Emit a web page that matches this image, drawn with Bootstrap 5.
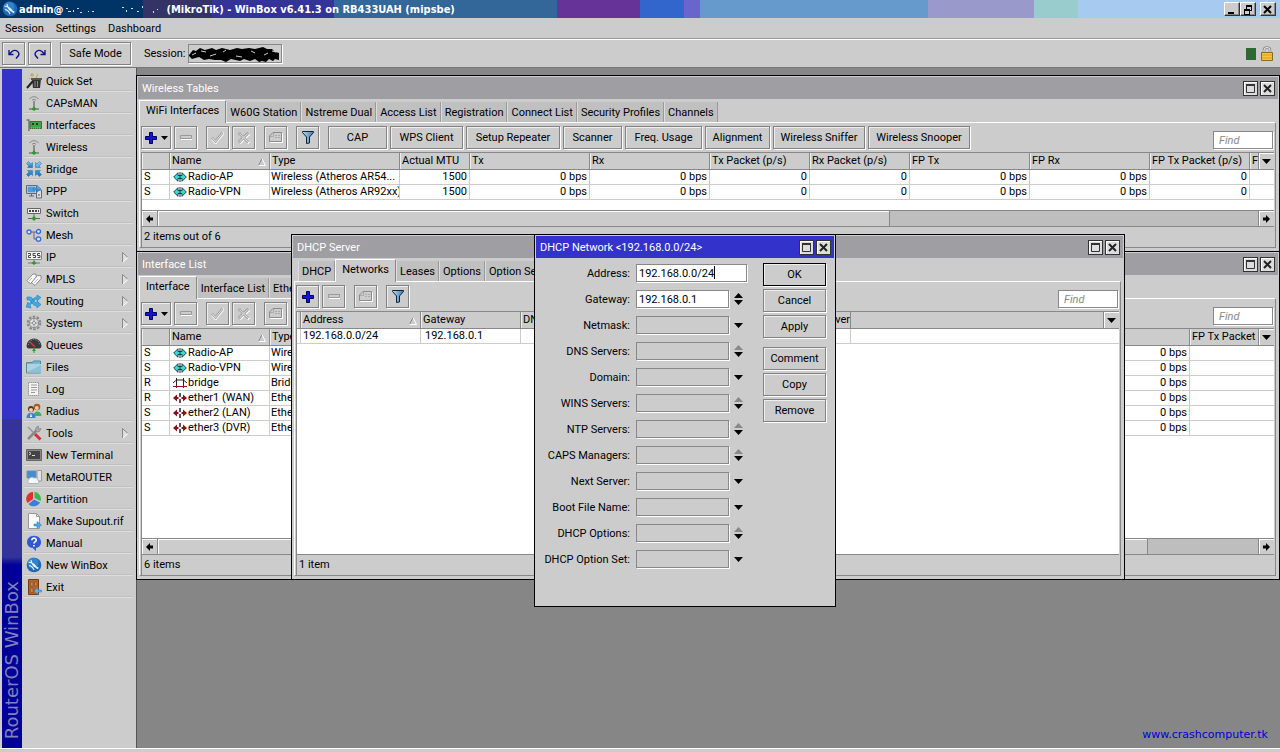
<!DOCTYPE html>
<html lang="en">
<head>
<meta charset="utf-8">
<meta name="viewport" content="width=device-width, initial-scale=1">
<title>WinBox</title>
<link rel="stylesheet" href="https://cdn.jsdelivr.net/npm/bootstrap@5.3.0/dist/css/bootstrap.min.css">
<script src="https://cdn.jsdelivr.net/npm/bootstrap@5.3.0/dist/js/bootstrap.bundle.min.js"></script>
<style>
:root{--face:#ccc;--edge:#828282}
body{font-family:Roboto,"Liberation Sans",sans-serif;font-size:11px;line-height:15px;color:#000;background:var(--face)}
button,input{font:inherit;color:inherit;padding:0;border-radius:0}
button{background:var(--face)}
a{color:inherit;text-decoration:none}
svg{display:block;flex:none}
.i16{width:16px;height:16px}
.app-title{height:18px;padding-left:2px;gap:1px;color:#fff;font-family:"DejaVu Sans Condensed","DejaVu Sans",sans-serif;font-weight:700;font-size:11px;background:linear-gradient(90deg,#036 143px,#336 143px 212px,#339 212px 334px,#369 334px 557px,#639 557px 640px,#36c 640px 684px,#66c 684px 700px,#69c 700px 928px,#99c 928px 1034px,#9cc 1034px 1078px,#a6caf0 1078px)}
.sysbtn{width:16px;height:14px;border:1px solid;border-color:#fff #333 #333 #fff;box-shadow:inset -1px -1px #888}
.menubar{height:21px;padding-left:5px;gap:12px;border-bottom:1px solid #999}
.toolbar-top{height:29px;gap:3px;padding:0 6px 0 2px;border-top:1px solid #fff;border-bottom:1px solid #777}
.btn3{height:23px;min-width:23px;border:1px solid var(--edge);box-shadow:inset 1px 1px #eee,1px 1px #fff;display:flex;align-items:center;justify-content:center;white-space:nowrap}
.session-box{width:94px;height:19px;border:1px solid #888;box-shadow:1px 1px #fff}
.slabel{margin-left:10px}
.rail{width:20px;margin:1px 0 0 2px;background:linear-gradient(#33c 350px,#339 350px 488px,#009 496px);color:#8080bb;font-family:"DejaVu Sans",sans-serif;font-size:18px;line-height:20px}
.rail span{writing-mode:vertical-rl;transform:rotate(180deg);padding-top:9px}
.side{width:114px;padding:2px 3px 0 2px}
.side a{height:22px;padding:1px 0 0 2px;gap:4px;border-bottom:1px solid #dedede;box-shadow:inset 0 -1px #c0c0c0}
.desk{background:#868686;box-shadow:inset 1px 0 #555}
.win{position:absolute;z-index:0;background:var(--face);border:1px solid #000;padding:1px;display:flex;flex-direction:column}
.win-wl{left:0;right:0;top:7px;height:177px}
.win-if{left:0;right:0;top:183px;height:329px}
.win-ds{left:155px;top:166px;width:834px;height:346px}
.win-dn{left:398px;top:166px;width:302px;height:373px}
.cap{height:22px;background:#9f9ea3;color:#fff;padding:0 3px 0 4px;gap:2px}
.cap.on{background:#33c}
.capbtn{width:15px;height:15px;border:1px solid #333;box-shadow:inset 1px 1px #fff;background:#ddd}
.tabs{height:23px;margin:0 2px 0 1px;position:relative;z-index:1}
.tabs button{height:20px;padding:0 3px;border:0;border-left:1px solid #ddd;border-right:1px solid #999;background:#c0c0c0;white-space:nowrap;display:flex;align-items:center}
.tabs button.on{height:23px;margin-bottom:-1px;padding:0 6px 3px;border-top:1px solid #fff;border-left-color:#fff;border-right-color:#888;background:var(--face)}
.panel{margin:0 2px 2px 1px;padding:0 1px;border:1px solid;border-color:#fff #888 #888 #fff;display:flex;flex-direction:column;flex:1;min-height:0}
.tools{height:29px;gap:3px;padding:3px 1px 3px 0}
.grp{margin-left:6px}
.grpv{margin-top:6px}
.w30{width:30px}.w59{width:59px}.w65{width:65px}.w71{width:71px}.w73{width:73px}.w77{width:77px}.w92{width:92px}.w94{width:94px}.w102{width:102px}
.field{height:18px;border:1px solid #888;box-shadow:1px 1px #fff;background:#fff;padding-left:2px;outline:0}
.find{width:60px;padding-left:5px}
.find::placeholder{font-style:italic;color:#888;opacity:1}
.sheet{background:#fff;border:1px solid #888;border-width:1px 0 0 1px;overflow:hidden;position:relative;flex:1;min-height:0}
.gridt{position:relative;table-layout:fixed;border-collapse:separate;border-spacing:0;width:0}
.gridt th,.gridt td{padding:0 2px;white-space:nowrap;overflow:hidden;border-right:1px solid #ccc;border-bottom:1px solid #ccc;height:15px;line-height:14px}
.gridt td:nth-child(3){padding:0 0 0 1px}
.gridt th{font-weight:400;background:var(--face);height:17px;line-height:16px;border-color:#888;box-shadow:inset 1px 0 #eee}
.gridt svg{display:inline-block;vertical-align:-3px;margin:0 1px}
.gridt .num td:nth-child(n+4){text-align:right}
.gridt .srt{position:relative}
.gridt .srt svg{position:absolute;right:2px;top:5px}
.gridt col{width:120px}
.gridt .c4{width:4px}.gridt .c28{width:28px}.gridt .c40{width:40px}.gridt .c70{width:70px}.gridt .c100{width:100px}.gridt .c130{width:130px}
.rest{position:absolute;top:0;left:0;right:0;height:17px;background:var(--face);border-bottom:1px solid #888}
.rowline{position:absolute;top:31px;left:0;right:0;height:1px;background:#ccc}
.pick{position:absolute;top:0;right:0;width:16px;height:17px;border:0;border-left:1px solid #888;border-bottom:1px solid #888;box-shadow:inset 1px 1px #fff}
.hs{height:16px;border-top:1px solid #888;border-left:1px solid #888;background:#bebebe}
.hs button{width:16px;border:0;border-right:1px solid #888;box-shadow:inset 1px 1px #fff}
.hs button:last-child{border-right:0;border-left:1px solid #888}
.thumb{background:var(--face);border-right:1px solid #888;box-shadow:inset 1px 1px #fff}
.status{height:21px;border:1px solid #888;border-width:1px 0 0 1px;padding:2px 2px 0}
.frm{gap:8px;padding-top:6px}
.frm label{width:94px;text-align:right;margin-right:6px;white-space:nowrap}
.frm .field{width:93px;background:var(--face)}
.frm .lit{background:#fff}
.frm .long{width:111px}
.frm button{border:0;width:11px;height:18px;margin-left:4px}
.acts{gap:3px;padding:5px 8px 0 0;width:71px}
.btn3.def{border-color:#000}
.caret{position:absolute;left:178px;top:8px;width:1px;height:13px;background:#000}
.site{position:absolute;right:12px;bottom:6px;color:#0000d8;font-family:"DejaVu Sans",sans-serif;font-size:11px}
.foot{height:4px;border-top:1px solid #fff}
</style>
</head>
<body class="vh-100 d-flex flex-column overflow-hidden">
<svg width="0" height="0" class="position-absolute" aria-hidden="true">
<defs>
<linearGradient id="gb" x2="0" y2="1"><stop stop-color="#7fd0f5"/><stop offset="1" stop-color="#1671c0"/></linearGradient>
<linearGradient id="gf" x2="1"><stop stop-color="#b8dcf4"/><stop offset="1" stop-color="#3a78b4"/></linearGradient>
<symbol id="globe" viewBox="0 0 16 16"><circle cx="8" cy="8" r="7.3" fill="#1e68b4"/><circle cx="7" cy="6" r="5.5" fill="#3b8ed6" opacity=".7"/><path d="M2.5 5c3 .5 7 3 9 7M5 3c.5 4 3 7 7.500 8M3 8.500c2 .3 4 2 5 4.500" fill="none" stroke="#e8f4ff" stroke-width="1.200"/></symbol>
<symbol id="quick" viewBox="0 0 16 16"><path d="M6 6h9l-1 9H7z" fill="#333"/><path d="M9 8v6M11.500 8v6" stroke="#888"/><path d="M5 6h11" stroke="#555" stroke-width="2"/><path d="M1 15 7 8" stroke="#222" stroke-width="2"/><path d="M6 0v4M4 2h4M10 5l2-4M3 5l1 1" stroke="#c8a030" stroke-width="1"/></symbol>
<symbol id="ant" viewBox="0 0 16 16"><path d="M3.500 4c2-3 7-3 9 0M6 5.500c1-1.500 3-1.500 4 0" fill="none" stroke="#888"/><path d="M8 6v7" stroke="#777" stroke-width="1.500"/><path d="M3 14h10" stroke="#555"/><path d="m8 11.500 2.500 2.500L8 16l-2.500-2z" fill="#2a9a2a"/></symbol>
<symbol id="card" viewBox="0 0 16 16"><path d="M.5 3H3v11" fill="none" stroke="#777" stroke-width="1.500"/><path d="M4 4.500h11.500v7H4z" fill="#3fa548" stroke="#2a7a34"/><path d="M6 6h2v2H6zM10 6h2v2h-2z" fill="#114a18"/><path d="M5 11h10" stroke="#d6c440" stroke-dasharray="1 1"/></symbol>
<symbol id="bri" viewBox="0 0 16 16"><g fill="url(#gb)" stroke="#1a6cae" stroke-width=".5"><path d="m.5 2.500 2-2 2.500 2.500 1.500-1.500v5h-5L3 5z"/><path d="m15.500 2.500-2-2L11 3 9.500 1.500v5h5L13 5zM.5 13.500l2 2L5 13l1.500 1.500v-5h-5L3 11zM15.500 13.500l-2 2L11 13l-1.500 1.500v-5h5L13 11z"/></g></symbol>
<symbol id="ppp" viewBox="0 0 16 16"><path d="M1 3h9v7H1z" fill="#4d9ce0" stroke="#e8e8e8"/><path d="M.5 2.500h10v8H.5zM3 13h5M5.500 11v2" fill="none" stroke="#667"/><path d="M10.500 7h5v8h-5z" fill="#ddd" stroke="#667"/><path d="M7 5h4V2l4 4-4 3V7H7z" fill="url(#gb)" stroke="#2a78b4" stroke-width=".5"/><path d="M12 12h2" stroke="#557"/></symbol>
<symbol id="sw" viewBox="0 0 16 16"><path d="M1.500 3.500h13v5h-13z" fill="#eee" stroke="#666"/><path d="M3 6h10" stroke="#444" stroke-width="2" stroke-dasharray="2 1"/><path d="M8 9v4M2 13.500h12" stroke="#666"/><path d="m8 11 2.500 2.500L8 16l-2.500-2.500z" fill="#2a9a2a"/></symbol>
<symbol id="mesh" viewBox="0 0 16 16"><path d="M5 5h6M8 5v7h3" fill="none" stroke="#667"/><g fill="#d9e8ff" stroke="#3a68d0" stroke-width="1.300"><circle cx="3" cy="5" r="2"/><circle cx="12.500" cy="4.500" r="2"/><circle cx="12.500" cy="12" r="2.200"/></g></symbol>
<symbol id="ip" viewBox="0 0 16 16"><path d="M.5 2.500h15v8H.5z" fill="#f2f2f2" stroke="#888"/><path d="M2 4.500h2.500v2H2.500v2H5M9.500 4.500H7v2h2.500v2H7M14 4.500h-2.500v2H14v2h-2.500" fill="none" stroke="#444"/><path d="M8 11v2M2 14h12" stroke="#777"/><path d="m8 12 2.500 2L8 16l-2.500-2z" fill="#2a9a2a"/></symbol>
<symbol id="mpls" viewBox="0 0 16 16"><g fill="#fafafa" stroke="#777" stroke-width=".8"><path d="M1 9.500 7 3l3 .2.200 3L4.500 13z"/><path d="m5.500 11.500 6-7 3.500.2v3L9 14.500z"/></g><path d="m3 10 3-3M8 12l4-4" stroke="#bbb"/></symbol>
<symbol id="rt" viewBox="0 0 16 16"><path d="M1 4h3c3 0 4 6 7 6V8l4 3.500-4 3.500v-2C6 13 5 7 3 7H1zM11 2l4 2.500L11 8V6C8 6 5 12 4 12l1 3-5-1 2-5 1 2c2-1 4-7 8-7z" fill="#45a9e6" stroke="#2280c0" stroke-width=".6"/></symbol>
<symbol id="sys" viewBox="0 0 16 16"><circle cx="8" cy="8" r="6.300" fill="none" stroke="#888" stroke-width="2" stroke-dasharray="2.500 1.450"/><circle cx="8" cy="8" r="4.700" fill="#ddd" stroke="#888"/><path d="M8 3.500v9M3.500 8h9" stroke="#999"/><circle cx="8" cy="8" r="1.500" fill="#fff" stroke="#888"/></symbol>
<symbol id="que" viewBox="0 0 16 16"><path d="M.5 9a7.500 7.500 0 0 1 15 0q0 2-2 2.500h-11Q.5 11 .5 9z" fill="#3a3a3a"/><path d="M2.500 8a5.500 5.500 0 0 1 11 0" fill="none" stroke="#aaa" stroke-dasharray="1 1.500"/><path d="m4 5 5 5" stroke="#f03030" stroke-width="1.400"/><path d="m8 11 2 3h-1.500v2h-1v-2H6z" fill="#2a9a2a"/></symbol>
<symbol id="fil" viewBox="0 0 16 16"><path d="M.5 3.500h6l1-1.500h7v12H.5z" fill="#7fb6c8" stroke="#4d8ba0"/><path d="M1 5h14v8.500H1z" fill="#a9d4e0"/><path d="M1 13 15 6v7.500z" fill="#8cc2d4"/></symbol>
<symbol id="log" viewBox="0 0 16 16"><path d="M2.500 1.500h10v13h-10z" fill="#f4f4f4" stroke="#999" stroke-dasharray="1.500 .5"/><path d="M5 4h6M5 6.500h6M5 9h6M5 11.500h4" stroke="#999"/></symbol>
<symbol id="rad" viewBox="0 0 16 16"><circle cx="11" cy="4" r="3.300" fill="#a85a20"/><circle cx="10.800" cy="5" r="1.900" fill="#f3cda0"/><path d="M7.500 13c0-6 8-6 8 0z" fill="#48a868"/><circle cx="5" cy="6" r="3" fill="#5a3818"/><circle cx="5" cy="7" r="2" fill="#f3cda0"/><path d="M.5 15c0-7 9-7 9 0z" fill="#3f80d0"/><path d="m5 10-1 4h2z" fill="#fff"/></symbol>
<symbol id="too" viewBox="0 0 16 16"><path d="m2 2 7 7" stroke="#999" stroke-width="1.500"/><path d="m9 9 5.500 5.500" stroke="#d83030" stroke-width="3"/><path d="m2 14 9-9" stroke="#888" stroke-width="2.500"/><path d="M10 2.500 12.500 1 12 4l3-.5-1.500 3-3 .5L9.500 5z" fill="#aaa" stroke="#777" stroke-width=".6"/></symbol>
<symbol id="ter" viewBox="0 0 16 16"><path d="M.5 2.500h15v11H.5z" fill="#888" stroke="#666"/><path d="M2 4h12v8H2z" fill="#444"/><path d="m3 5 2 1.500L3 8M6 8.500h3" fill="none" stroke="#ddd"/></symbol>
<symbol id="met" viewBox="0 0 16 16"><path d="M1 2h9v7H1z" fill="#3f8fd8" stroke="#889"/><path d="M11 1.500h4.500V12H11z" fill="#e4e4e4" stroke="#999"/><path d="M3 14.500a2.200 2.200 0 0 1 0-4 3 3 0 0 1 5-1.500 3 3 0 0 1 4 2.500 1.600 1.600 0 0 1 0 3z" fill="#f4f8fc" stroke="#9ab" stroke-width=".8"/></symbol>
<symbol id="par" viewBox="0 0 16 16"><path d="M7 8V1a7 7 0 0 0-5.500 11z" fill="#e03030"/><path d="M8.500 7V.8A7 7 0 0 1 14.500 10z" fill="#3fb54a"/><path d="m8 8.500 6 3A7 7 0 0 1 2.500 13z" fill="#3a7fd8"/></symbol>
<symbol id="sup" viewBox="0 0 16 16"><path d="M2.500.5h8l3 3v12h-11z" fill="#fafafa" stroke="#999"/><path d="M10.500.5v3h3" fill="none" stroke="#999"/><path d="M8 11h3V8.500l4.500 3.500-4.500 3.500V13H8z" fill="#4aa8e8" stroke="#2a78b4" stroke-width=".5"/></symbol>
<symbol id="man" viewBox="0 0 16 16"><path d="M8 .8c9 0 9 11.500 2 12L10 16l-3.500-3.200C-1.500 12-.5.800 8 .8z" fill="#3058d0"/><path d="M5.800 5.200c0-3 4.800-2.600 4.400.2C10 7 8 7 8 8.600M8 10v1.600" fill="none" stroke="#fff" stroke-width="1.600"/></symbol>
<symbol id="exi" viewBox="0 0 16 16"><path d="M2.500.5h10v15h-10z" fill="#b5652b" stroke="#7a3c12"/><path d="M4.500 3h2.500v4H4.500zM8.500 3H11v4H8.500zM4.500 9h2.500v4.500H4.500z" fill="#d08848" stroke="#7a3c12" stroke-width=".5"/><path d="M15.500 11h-3.500V8.500L8 12l4 3.500V13h3.500z" fill="#5ab4f0" stroke="#2a78b4" stroke-width=".5"/></symbol>
<symbol id="sub" viewBox="0 0 7 11"><path d="M.5.5v10L6 5.500z" fill="#ddd"/><path d="M.5 10.500V.5" stroke="#888"/><path d="M.5.500 6 5.500" stroke="#888"/><path d="M.5 10.500 6 5.500" stroke="#fff"/></symbol>
<symbol id="plus" viewBox="0 0 12 12"><path d="M4.500.5h3v4h4v3h-4v4h-3v-4h-4v-3h4z" fill="#1414d8" stroke="#000050"/></symbol>
<symbol id="minus" viewBox="0 0 12 5"><path d="M1 1h11v4H1z" fill="#fff"/><path d="M.5.5h11v3H.5z" fill="#ccc" stroke="#999"/></symbol>
<symbol id="tick" viewBox="0 0 13 13"><path d="m1.500 7.500 3 4 8-10" fill="none" stroke="#fff" stroke-width="3"/><path d="m1 6.500 3.500 4 7-9" fill="none" stroke="#999" stroke-width="2.600"/><path d="m1 6.500 3.500 4 7-9" fill="none" stroke="#d4d4d4" stroke-width="1.200"/></symbol>
<symbol id="cros" viewBox="0 0 13 13"><path d="m2 2 10 10M12 2 2 12" stroke="#fff" stroke-width="3"/><path d="m1 1 10 10M11 1 1 11" stroke="#999" stroke-width="3"/><path d="m1.500 1.500 9 9M10.500 1.500l-9 9" stroke="#d4d4d4" stroke-width="1.400"/></symbol>
<symbol id="note" viewBox="0 0 14 11"><path d="M4.500 1.500h9v9h-12v-6z" fill="none" stroke="#fff"/><path d="M4 .5h8.500v9H.5V4z" fill="#ccc" stroke="#8c8c8c"/><path d="M4.500 1v3.500H1M6 3.500h2M9 3.500h2M6 5.500h2M9 5.500h2" fill="none" stroke="#aaa"/></symbol>
<symbol id="fun" viewBox="0 0 12 13"><path d="M.5.5h11v1l-4 4.500v6l-3 .5V6l-4-4.500z" fill="url(#gf)" stroke="#123"/></symbol>
<symbol id="dn" viewBox="0 0 9 5"><path d="M0 0h9L4.500 5z"/></symbol>
<symbol id="max" viewBox="0 0 9 9"><path d="M.5 1h8v7.500h-8z" fill="none" stroke="#333"/><path d="M0 1h9" stroke="#333" stroke-width="2"/></symbol>
<symbol id="cls" viewBox="0 0 9 9"><path d="m1 1 7 7M8 1 1 8" stroke="#222" stroke-width="2"/></symbol>
<symbol id="la" viewBox="0 0 7 8"><path d="M0 4 4 0v2.500h3v3H4V8z"/></symbol>
<symbol id="ra" viewBox="0 0 7 8"><path d="M7 4 3 0v2.500H0v3h3V8z"/></symbol>
<symbol id="asc" viewBox="0 0 8 8"><path d="M.5 7.500 4 .5" stroke="#888"/><path d="m4 .5 3.500 7h-7" fill="none" stroke="#fff"/></symbol>
<symbol id="wl" viewBox="0 0 14 12"><path d="M.700 6 5 1.700V4.500h4V1.700L13.300 6 9 10.300V7.500H5v2.800z" fill="#3fd8d0" stroke="#134" stroke-width=".9"/><path d="M7 1v10" stroke="#134"/></symbol>
<symbol id="br" viewBox="0 0 14 12"><path d="M3.500 1v7M10.500 1v7M0 6l3.500-3h7L14 6" fill="none" stroke="#222"/><path d="M0 9.500h14M3.500 8v3M10.500 8v3" stroke="#a00c1c"/></symbol>
<symbol id="et" viewBox="0 0 14 12"><path d="M0 6 4 2.500v7zM14 6l-4-3.500v7z" fill="#8a1020"/><path d="M3 6h2.500M8.500 6H11" stroke="#8a1020" stroke-width="2"/><path d="M7 1v10" stroke="#222" stroke-width="1.500" stroke-dasharray="4 2"/></symbol>
<symbol id="ud" viewBox="0 0 9 12"><path d="M0 5h9L4.500 0zM0 7h9L4.500 12z"/></symbol>
<symbol id="gd" viewBox="0 0 9 12"><path d="M0 5h9L4.500 0z" fill="#888"/><path d="M0 7h9L4.500 12z"/></symbol>
</defs>
</svg>

<header>
  <div class="app-title d-flex align-items-center">
    <svg class="i16"><use href="#globe"/></svg><span>admin@</span>
    <svg width="101" height="14" fill="#cfe0f0"><path d="M2 6h2v1H2zM4 9h3v1H4zM9 8h1v2H9zM13 6h2v1h-2zM16 10h2v1h-2zM24 9h1v1h-1zM28 9h2v1h-2zM58 5h2v1h-2zM62 8h1v2h-1zM67 6h2v1h-2zM73 9h2v1h-2zM78 4h1v2h-1zM89 9h1v2h-1zM93 7h1v1h-1z"/></svg>
    <span>(MikroTik) - WinBox v6.41.3 on RB433UAH (mipsbe)</span>
    <div class="d-flex ms-auto me-1">
      <button class="sysbtn" aria-label="Minimize"><svg width="12" height="10"><path d="M3 8h6v2H3z"/></svg></button>
      <button class="sysbtn" aria-label="Restore"><svg width="13" height="11"><path d="M5 1h6v2H5zM5 3h1v2H5zM10 3h1v4h-2V6h1zM3 5h6v2H3zM3 7h1v4H3zM8 7h1v4H8zM4 10h4v1H4z"/></svg></button>
      <button class="sysbtn ms-1" aria-label="Close"><svg width="13" height="11"><path d="m3 2 7 7M10 2 3 9" stroke="#000" stroke-width="2"/></svg></button>
    </div>
  </div>
  <nav class="menubar d-flex align-items-center"><a href="#">Session</a><a href="#">Settings</a><a href="#">Dashboard</a></nav>
  <div class="toolbar-top d-flex align-items-center">
    <button class="btn3" aria-label="Undo"><svg width="12" height="10" fill="none" stroke="#11118a" stroke-width="1.400"><path d="M1 1v4.500h4.500M1.500 5 4 2.500c4-3 8 1 6.500 4L8 9.500"/></svg></button>
    <button class="btn3" aria-label="Redo"><svg width="12" height="10" fill="none" stroke="#11118a" stroke-width="1.400"><path d="M11 1v4.500H6.500M10.500 5 8 2.500c-4-3-8 1-6.500 4L4 9.500"/></svg></button>
    <button class="btn3 grp w71">Safe Mode</button>
    <span class="slabel">Session:</span>
    <div class="session-box"><svg width="92" height="17"><path d="m0 10 4-5 3 1 4-3 5 2 7-2 4 2 6-2 8 2 7-2 5 1 7-1 6 1 8-2 4 2 5 0 3 3 4 1v7l-4-1-2 2-4-2-3 3-4-1-3 1-4-3-5 2-6-2-4 2-9-2-5 3-5-2-6 0-6-1-5 1-5-3-7 2-3-3-3 1-4-3z"/><path d="m3 10 4-2M12 6l5 1M21 11l6-2M34 7l3-2M47 11l6 1M62 6l4 2M75 10l4-2M83 6l4 1" stroke="#ccc"/></svg></div>
    <div class="ms-auto d-flex align-items-center gap-1">
      <svg width="10" height="12"><path d="M0 0h10v12H0z" fill="#2f6830"/></svg>
      <svg width="14" height="16"><path d="M4 8V4q0-2.500 3-2.500T10 4v4" fill="none" stroke="#888" stroke-width="2.500"/><path d="M4 8V4q0-2.500 3-2.500T10 4v4" fill="none" stroke="#eee"/><path d="M1.500 6.500h11v8h-11z" fill="#f7c53c" stroke="#8a6a20"/><path d="M2 9h10M2 12h10" stroke="#e09a20"/></svg>
    </div>
  </div>
</header>

<div class="d-flex flex-fill overflow-hidden">
  <div class="rail d-flex align-items-end"><span>RouterOS WinBox</span></div>
  <nav class="side">
    <a href="#" class="d-flex align-items-center"><svg class="i16"><use href="#quick"/></svg>Quick Set</a>
    <a href="#" class="d-flex align-items-center"><svg class="i16"><use href="#ant"/></svg>CAPsMAN</a>
    <a href="#" class="d-flex align-items-center"><svg class="i16"><use href="#card"/></svg>Interfaces</a>
    <a href="#" class="d-flex align-items-center"><svg class="i16"><use href="#ant"/></svg>Wireless</a>
    <a href="#" class="d-flex align-items-center"><svg class="i16"><use href="#bri"/></svg>Bridge</a>
    <a href="#" class="d-flex align-items-center"><svg class="i16"><use href="#ppp"/></svg>PPP</a>
    <a href="#" class="d-flex align-items-center"><svg class="i16"><use href="#sw"/></svg>Switch</a>
    <a href="#" class="d-flex align-items-center"><svg class="i16"><use href="#mesh"/></svg>Mesh</a>
    <a href="#" class="d-flex align-items-center"><svg class="i16"><use href="#ip"/></svg>IP<svg width="7" height="11" class="ms-auto me-1"><use href="#sub"/></svg></a>
    <a href="#" class="d-flex align-items-center"><svg class="i16"><use href="#mpls"/></svg>MPLS<svg width="7" height="11" class="ms-auto me-1"><use href="#sub"/></svg></a>
    <a href="#" class="d-flex align-items-center"><svg class="i16"><use href="#rt"/></svg>Routing<svg width="7" height="11" class="ms-auto me-1"><use href="#sub"/></svg></a>
    <a href="#" class="d-flex align-items-center"><svg class="i16"><use href="#sys"/></svg>System<svg width="7" height="11" class="ms-auto me-1"><use href="#sub"/></svg></a>
    <a href="#" class="d-flex align-items-center"><svg class="i16"><use href="#que"/></svg>Queues</a>
    <a href="#" class="d-flex align-items-center"><svg class="i16"><use href="#fil"/></svg>Files</a>
    <a href="#" class="d-flex align-items-center"><svg class="i16"><use href="#log"/></svg>Log</a>
    <a href="#" class="d-flex align-items-center"><svg class="i16"><use href="#rad"/></svg>Radius</a>
    <a href="#" class="d-flex align-items-center"><svg class="i16"><use href="#too"/></svg>Tools<svg width="7" height="11" class="ms-auto me-1"><use href="#sub"/></svg></a>
    <a href="#" class="d-flex align-items-center"><svg class="i16"><use href="#ter"/></svg>New Terminal</a>
    <a href="#" class="d-flex align-items-center"><svg class="i16"><use href="#met"/></svg>MetaROUTER</a>
    <a href="#" class="d-flex align-items-center"><svg class="i16"><use href="#par"/></svg>Partition</a>
    <a href="#" class="d-flex align-items-center text-nowrap"><svg class="i16"><use href="#sup"/></svg>Make Supout.rif</a>
    <a href="#" class="d-flex align-items-center"><svg class="i16"><use href="#man"/></svg>Manual</a>
    <a href="#" class="d-flex align-items-center"><svg class="i16"><use href="#globe"/></svg>New WinBox</a>
    <a href="#" class="d-flex align-items-center"><svg class="i16"><use href="#exi"/></svg>Exit</a>
  </nav>

  <main class="desk flex-fill position-relative overflow-hidden">
    <section class="win win-wl">
      <div class="cap d-flex align-items-center"><span class="me-auto">Wireless Tables</span>
        <button class="capbtn" aria-label="Maximize"><svg width="9" height="9" class="m-auto"><use href="#max"/></svg></button><button class="capbtn" aria-label="Close"><svg width="9" height="9" class="m-auto"><use href="#cls"/></svg></button></div>
      <div class="tabs d-flex align-items-end"><button class="on">WiFi Interfaces</button><button>W60G Station</button><button>Nstreme Dual</button><button>Access List</button><button>Registration</button><button>Connect List</button><button>Security Profiles</button><button>Channels</button></div>
      <div class="panel">
        <div class="tools d-flex align-items-end">
          <button class="btn3 w30" aria-label="Add"><svg width="12" height="12"><use href="#plus"/></svg><svg width="7" height="4" class="ms-1"><use href="#dn"/></svg></button>
          <button class="btn3" aria-label="Remove"><svg width="12" height="5"><use href="#minus"/></svg></button>
          <button class="btn3 grp" aria-label="Enable"><svg width="13" height="13"><use href="#tick"/></svg></button>
          <button class="btn3" aria-label="Disable"><svg width="12" height="12"><use href="#cros"/></svg></button>
          <button class="btn3 grp" aria-label="Comment"><svg width="14" height="11"><use href="#note"/></svg></button>
          <button class="btn3 grp" aria-label="Filter"><svg width="12" height="13"><use href="#fun"/></svg></button>
          <button class="btn3 grp w59">CAP</button>
          <button class="btn3 w73">WPS Client</button>
          <button class="btn3 w94">Setup Repeater</button>
          <button class="btn3 w59">Scanner</button>
          <button class="btn3 w77">Freq. Usage</button>
          <button class="btn3 w65">Alignment</button>
          <button class="btn3 w92">Wireless Sniffer</button>
          <button class="btn3 w102">Wireless Snooper</button>
          <input class="field find ms-auto" placeholder="Find" aria-label="Find wireless interface">
        </div>
        <div class="sheet">
          <div class="rest"></div>
          <table class="gridt">
            <colgroup><col class="c28"><col class="c100"><col class="c130"><col class="c70"><col><col><col class="c100"><col class="c100"><col><col><col class="c100"><col class="c100"></colgroup>
            <thead><tr><th></th><th class="srt">Name<svg width="8" height="8"><use href="#asc"/></svg></th><th>Type</th><th>Actual MTU</th><th>Tx</th><th>Rx</th><th>Tx Packet (p/s)</th><th>Rx Packet (p/s)</th><th>FP Tx</th><th>FP Rx</th><th>FP Tx Packet (p/s)</th><th>F</th></tr></thead>
            <tbody class="num">
              <tr><td>S</td><td><svg width="14" height="12"><use href="#wl"/></svg>Radio-AP</td><td>Wireless (Atheros AR54...</td><td>1500</td><td>0 bps</td><td>0 bps</td><td>0</td><td>0</td><td>0 bps</td><td>0 bps</td><td>0</td><td></td></tr>
              <tr><td>S</td><td><svg width="14" height="12"><use href="#wl"/></svg>Radio-VPN</td><td>Wireless (Atheros AR92xx)</td><td>1500</td><td>0 bps</td><td>0 bps</td><td>0</td><td>0</td><td>0 bps</td><td>0 bps</td><td>0</td><td></td></tr>
            </tbody>
          </table>
          <button class="pick" aria-label="Columns"><svg width="9" height="5" class="m-auto"><use href="#dn"/></svg></button>
        </div>
        <div class="hs d-flex"><button aria-label="Scroll left"><svg width="7" height="8" class="m-auto"><use href="#la"/></svg></button><div class="flex-fill d-flex"><div class="thumb" style="width:66.5%"></div></div><button aria-label="Scroll right"><svg width="7" height="8" class="m-auto"><use href="#ra"/></svg></button></div>
        <div class="status">2 items out of 6</div>
      </div>
    </section>

    <section class="win win-if">
      <div class="cap d-flex align-items-center"><span class="me-auto">Interface List</span>
        <button class="capbtn" aria-label="Maximize"><svg width="9" height="9" class="m-auto"><use href="#max"/></svg></button><button class="capbtn" aria-label="Close"><svg width="9" height="9" class="m-auto"><use href="#cls"/></svg></button></div>
      <div class="tabs d-flex align-items-end"><button class="on">Interface</button><button>Interface List</button><button>Ethernet</button></div>
      <div class="panel">
        <div class="tools d-flex align-items-end">
          <button class="btn3 w30" aria-label="Add"><svg width="12" height="12"><use href="#plus"/></svg><svg width="7" height="4" class="ms-1"><use href="#dn"/></svg></button>
          <button class="btn3" aria-label="Remove"><svg width="12" height="5"><use href="#minus"/></svg></button>
          <button class="btn3 grp" aria-label="Enable"><svg width="13" height="13"><use href="#tick"/></svg></button>
          <button class="btn3" aria-label="Disable"><svg width="12" height="12"><use href="#cros"/></svg></button>
          <button class="btn3 grp" aria-label="Comment"><svg width="14" height="11"><use href="#note"/></svg></button>
          <input class="field find ms-auto" placeholder="Find" aria-label="Find interface">
        </div>
        <div class="sheet">
          <div class="rest"></div>
          <table class="gridt">
            <colgroup><col class="c28"><col class="c100"><col class="c130"><col class="c70"><col class="c40"><col><col><col class="c100"><col class="c100"><col><col><col class="c100"></colgroup>
            <thead><tr><th></th><th class="srt">Name<svg width="8" height="8"><use href="#asc"/></svg></th><th>Type</th><th></th><th></th><th></th><th></th><th></th><th></th><th></th><th></th><th>FP Tx Packet</th></tr></thead>
            <tbody class="num">
              <tr><td>S</td><td><svg width="14" height="12"><use href="#wl"/></svg>Radio-AP</td><td>Wireless</td><td></td><td></td><td></td><td></td><td></td><td></td><td></td><td>0 bps</td><td></td></tr>
              <tr><td>S</td><td><svg width="14" height="12"><use href="#wl"/></svg>Radio-VPN</td><td>Wireless</td><td></td><td></td><td></td><td></td><td></td><td></td><td></td><td>0 bps</td><td></td></tr>
              <tr><td>R</td><td><svg width="14" height="12"><use href="#br"/></svg>bridge</td><td>Bridge</td><td></td><td></td><td></td><td></td><td></td><td></td><td></td><td>0 bps</td><td></td></tr>
              <tr><td>R</td><td><svg width="14" height="12"><use href="#et"/></svg>ether1 (WAN)</td><td>Ethernet</td><td></td><td></td><td></td><td></td><td></td><td></td><td></td><td>0 bps</td><td></td></tr>
              <tr><td>S</td><td><svg width="14" height="12"><use href="#et"/></svg>ether2 (LAN)</td><td>Ethernet</td><td></td><td></td><td></td><td></td><td></td><td></td><td></td><td>0 bps</td><td></td></tr>
              <tr><td>S</td><td><svg width="14" height="12"><use href="#et"/></svg>ether3 (DVR)</td><td>Ethernet</td><td></td><td></td><td></td><td></td><td></td><td></td><td></td><td>0 bps</td><td></td></tr>
            </tbody>
          </table>
          <button class="pick" aria-label="Columns"><svg width="9" height="5" class="m-auto"><use href="#dn"/></svg></button>
        </div>
        <div class="hs d-flex"><button aria-label="Scroll left"><svg width="7" height="8" class="m-auto"><use href="#la"/></svg></button><div class="flex-fill d-flex"><div class="thumb" style="width:90%"></div></div><button aria-label="Scroll right"><svg width="7" height="8" class="m-auto"><use href="#ra"/></svg></button></div>
        <div class="status">6 items</div>
      </div>
    </section>

    <section class="win win-ds">
      <div class="cap d-flex align-items-center"><span class="me-auto">DHCP Server</span>
        <button class="capbtn" aria-label="Maximize"><svg width="9" height="9" class="m-auto"><use href="#max"/></svg></button><button class="capbtn" aria-label="Close"><svg width="9" height="9" class="m-auto"><use href="#cls"/></svg></button></div>
      <div class="tabs d-flex align-items-end ps-1"><button>DHCP</button><button class="on">Networks</button><button>Leases</button><button>Options</button><button>Option Sets</button></div>
      <div class="panel">
        <div class="tools d-flex align-items-end">
          <button class="btn3" aria-label="Add"><svg width="12" height="12"><use href="#plus"/></svg></button>
          <button class="btn3" aria-label="Remove"><svg width="12" height="5"><use href="#minus"/></svg></button>
          <button class="btn3 grp" aria-label="Comment"><svg width="14" height="11"><use href="#note"/></svg></button>
          <button class="btn3 grp" aria-label="Filter"><svg width="12" height="13"><use href="#fun"/></svg></button>
          <input class="field find ms-auto" placeholder="Find" aria-label="Find network">
        </div>
        <div class="sheet">
          <div class="rest"></div><div class="rowline"></div>
          <table class="gridt">
            <colgroup><col class="c4"><col><col class="c100"><col class="c100"><col class="c130"><col class="c100"></colgroup>
            <thead><tr><th class="p-0"></th><th class="srt">Address<svg width="8" height="8"><use href="#asc"/></svg></th><th>Gateway</th><th>DNS Servers</th><th></th><th class="p-0 text-end">Next Server</th></tr></thead>
            <tbody><tr><td class="p-0"></td><td>192.168.0.0/24</td><td class="px-1">192.168.0.1</td><td></td><td></td><td></td></tr></tbody>
          </table>
          <button class="pick" aria-label="Columns"><svg width="9" height="5" class="m-auto"><use href="#dn"/></svg></button>
        </div>
        <div class="status">1 item</div>
      </div>
    </section>

    <section class="win win-dn">
      <div class="cap on d-flex align-items-center"><span class="me-auto">DHCP Network &lt;192.168.0.0/24&gt;</span>
        <button class="capbtn" aria-label="Maximize"><svg width="9" height="9" class="m-auto"><use href="#max"/></svg></button><button class="capbtn" aria-label="Close"><svg width="9" height="9" class="m-auto"><use href="#cls"/></svg></button></div>
      <form class="d-flex justify-content-between">
        <div class="frm d-flex flex-column position-relative">
          <div class="d-flex align-items-center"><label for="f1">Address:</label><input id="f1" class="field lit long" value="192.168.0.0/24"></div>
          <div class="d-flex align-items-center"><label for="f2">Gateway:</label><input id="f2" class="field lit" value="192.168.0.1"><button type="button" aria-label="Gateway entries"><svg width="9" height="12" class="m-auto"><use href="#ud"/></svg></button></div>
          <div class="d-flex align-items-center"><label for="f3">Netmask:</label><input id="f3" class="field"><button type="button" aria-label="Set netmask"><svg width="9" height="5" class="m-auto"><use href="#dn"/></svg></button></div>
          <div class="d-flex align-items-center"><label for="f4">DNS Servers:</label><input id="f4" class="field"><button type="button" aria-label="DNS entries"><svg width="9" height="12" class="m-auto"><use href="#gd"/></svg></button></div>
          <div class="d-flex align-items-center"><label for="f5">Domain:</label><input id="f5" class="field"><button type="button" aria-label="Set domain"><svg width="9" height="5" class="m-auto"><use href="#dn"/></svg></button></div>
          <div class="d-flex align-items-center"><label for="f6">WINS Servers:</label><input id="f6" class="field"><button type="button" aria-label="WINS entries"><svg width="9" height="12" class="m-auto"><use href="#gd"/></svg></button></div>
          <div class="d-flex align-items-center"><label for="f7">NTP Servers:</label><input id="f7" class="field"><button type="button" aria-label="NTP entries"><svg width="9" height="12" class="m-auto"><use href="#gd"/></svg></button></div>
          <div class="d-flex align-items-center"><label for="f8">CAPS Managers:</label><input id="f8" class="field"><button type="button" aria-label="CAPS entries"><svg width="9" height="12" class="m-auto"><use href="#gd"/></svg></button></div>
          <div class="d-flex align-items-center"><label for="f9">Next Server:</label><input id="f9" class="field"><button type="button" aria-label="Set next server"><svg width="9" height="5" class="m-auto"><use href="#dn"/></svg></button></div>
          <div class="d-flex align-items-center"><label for="f10">Boot File Name:</label><input id="f10" class="field"><button type="button" aria-label="Set boot file"><svg width="9" height="5" class="m-auto"><use href="#dn"/></svg></button></div>
          <div class="d-flex align-items-center"><label for="f11">DHCP Options:</label><input id="f11" class="field"><button type="button" aria-label="Option entries"><svg width="9" height="12" class="m-auto"><use href="#gd"/></svg></button></div>
          <div class="d-flex align-items-center"><label for="f12">DHCP Option Set:</label><input id="f12" class="field"><button type="button" aria-label="Set option set"><svg width="9" height="5" class="m-auto"><use href="#dn"/></svg></button></div>
          <span class="caret"></span>
        </div>
        <div class="acts d-flex flex-column">
          <button type="button" class="btn3 def">OK</button><button type="button" class="btn3">Cancel</button><button type="button" class="btn3">Apply</button>
          <button type="button" class="btn3 grpv">Comment</button><button type="button" class="btn3">Copy</button><button type="button" class="btn3">Remove</button>
        </div>
      </form>
    </section>
    <a class="site" href="#">www.crashcomputer.tk</a>
  </main>
</div>
<footer class="foot"></footer>
</body>
</html>
